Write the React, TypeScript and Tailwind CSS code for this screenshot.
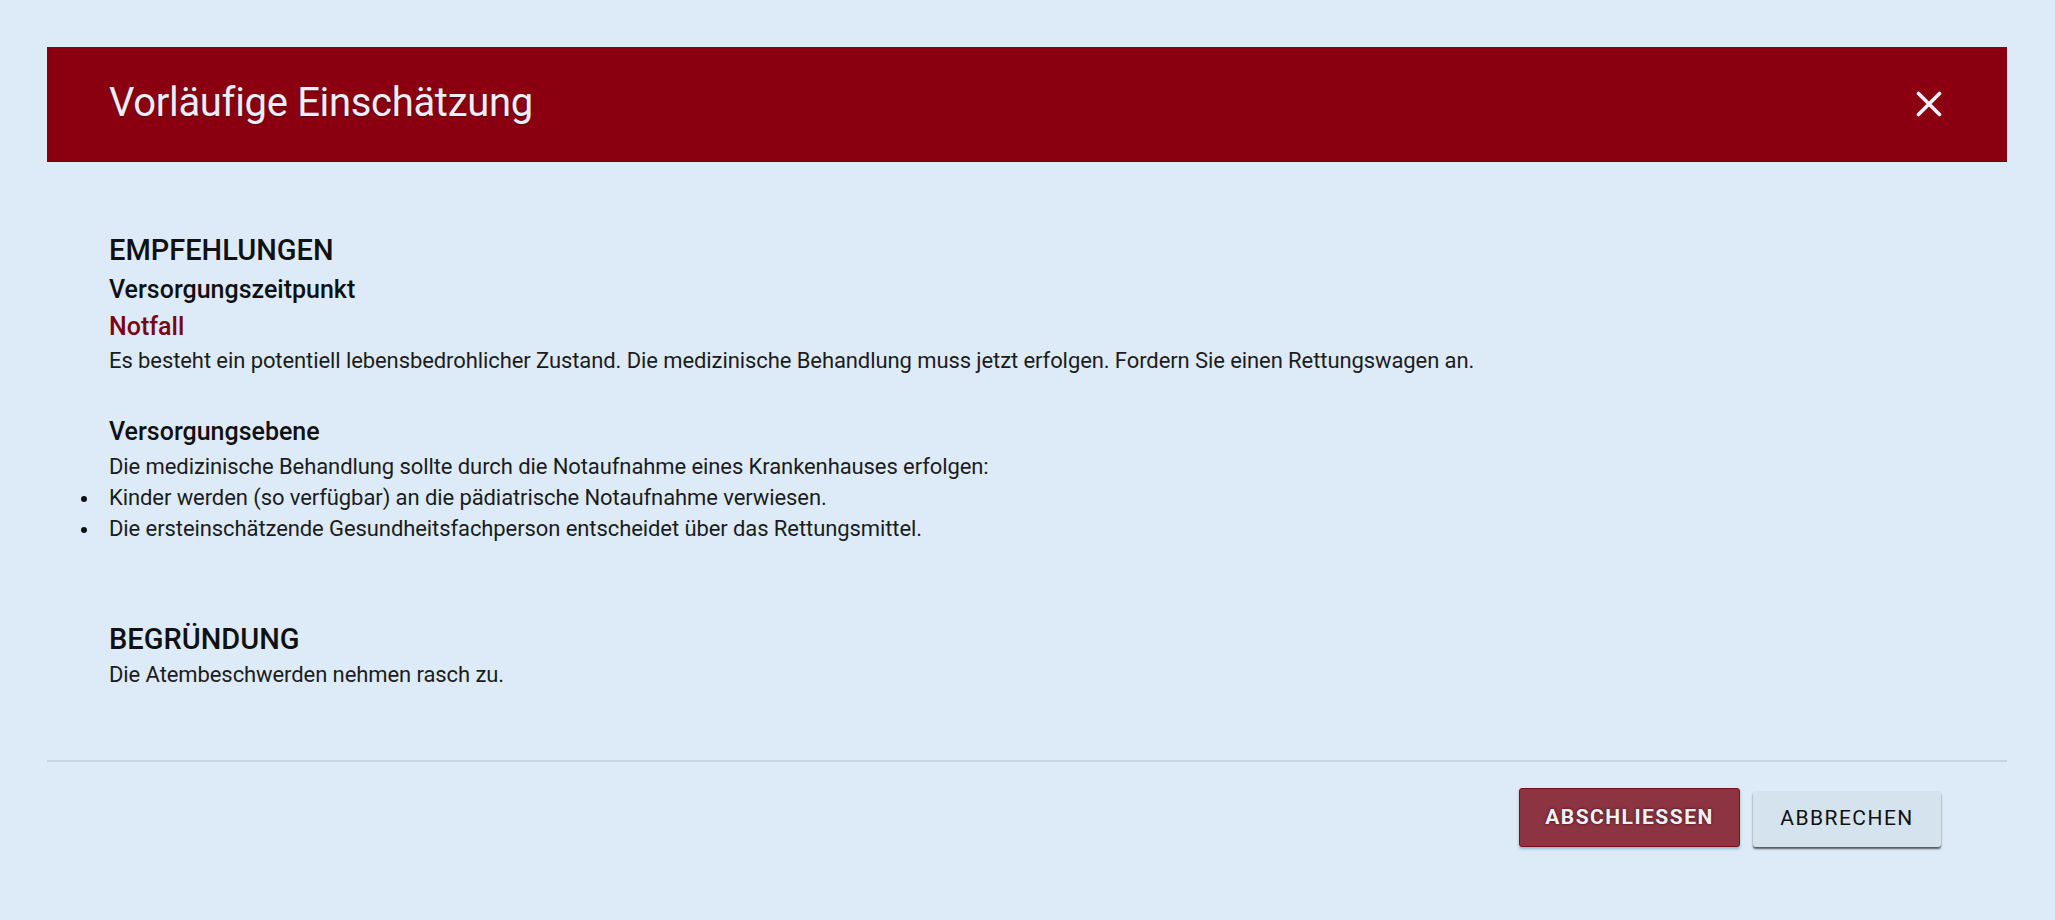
import React from 'react';

const CloseIcon: React.FC = () => (
    <svg width="26" height="26" viewBox="0 0 26 26" fill="none" aria-hidden="true">
        <path d="M2.5 2.5L23.5 23.5M23.5 2.5L2.5 23.5" stroke="#eef3fa" strokeWidth="3.6" strokeLinecap="round" />
    </svg>
);

const bullets = [
    'Kinder werden (so verfügbar) an die pädiatrische Notaufnahme verwiesen.',
    'Die ersteinschätzende Gesundheitsfachperson entscheidet über das Rettungsmittel.',
];

const App: React.FC = () => {
    return (
        <div className="min-h-[920px] bg-[#ddebf8] pt-[47px] font-[Roboto,sans-serif]">
            <div className="ml-[47px] w-[1960px]">
                {/* header */}
                <div className="flex h-[115px] items-center justify-between border-b border-[#6c0010] bg-[#8b0011] pl-[62px] pr-[66px]">
                    <h1 className="-mt-[2px] text-[40px] leading-[48px] font-normal tracking-[-0.008em] text-[#e8eff8] [text-shadow:0_1px_2px_rgba(60,0,0,0.6)]">
                        Vorläufige Einschätzung
                    </h1>
                    <button className="-mr-[1px] flex h-[26px] w-[26px] items-center justify-center">
                        <CloseIcon />
                    </button>
                </div>

                {/* body */}
                <div className="pl-[62px] pr-[66px] text-[#111]">
                    <h2 className="mt-[70px] text-[29px] leading-[36px] font-medium">EMPFEHLUNGEN</h2>
                    <h3 className="mt-[6px] text-[25px] leading-[32px] font-medium">Versorgungszeitpunkt</h3>
                    <p className="mt-[5px] text-[25px] leading-[32px] font-medium text-[#7a0612]">Notfall</p>
                    <p className="mt-[2px] text-[22px] leading-[31px] tracking-[-0.004em] text-[#1c1c1c]">
                        Es besteht ein potentiell lebensbedrohlicher Zustand. Die medizinische Behandlung muss jetzt erfolgen. Fordern Sie einen Rettungswagen an.
                    </p>

                    <h3 className="mt-[40px] text-[25px] leading-[32px] font-medium">Versorgungsebene</h3>
                    <p className="mt-[3px] text-[22px] leading-[31px] tracking-[-0.004em] text-[#1c1c1c]">
                        Die medizinische Behandlung sollte durch die Notaufnahme eines Krankenhauses erfolgen:
                    </p>
                    <ul className="-ml-[28px] text-[22px] leading-[31px] tracking-[-0.004em] text-[#1c1c1c]">
                        {bullets.map(item => (
                            <li key={item} className="flex items-start">
                                <span className="w-[28px] shrink-0 pt-[14px]">
                                    <span className="block h-[6px] w-[6px] rounded-full bg-[#111]" />
                                </span>
                                <span>{item}</span>
                            </li>
                        ))}
                    </ul>

                    <h2 className="mt-[77px] text-[29px] leading-[36px] font-medium">BEGRÜNDUNG</h2>
                    <p className="mt-[2px] text-[22px] leading-[31px] tracking-[-0.004em] text-[#1c1c1c]">Die Atembeschwerden nehmen rasch zu.</p>
                </div>

                {/* footer */}
                <div className="mt-[70px] h-[2px] bg-[#c8d4e1]" />
                <div className="flex justify-end gap-[13px] pt-[26px] pr-[66px] pb-[72px]">
                    <button className="h-[59px] w-[221px] rounded-[3px] border border-[#7b0d1b] bg-[#8c3442] text-[21px] font-bold tracking-[0.07em] text-[#eef2f8] shadow-[0_2px_3px_rgba(70,150,160,0.55)] [text-shadow:0_0_3px_rgba(60,0,10,0.9)]">
                        ABSCHLIESSEN
                    </button>
                    <button className="mt-[3px] h-[56px] w-[188px] rounded-[3px] bg-[#d5e3ef] text-[21px] font-normal tracking-[0.07em] text-[#111] shadow-[0_2px_2px_rgba(40,40,40,0.75)]">
                        ABBRECHEN
                    </button>
                </div>
            </div>
        </div>
    );
};

export default App;
